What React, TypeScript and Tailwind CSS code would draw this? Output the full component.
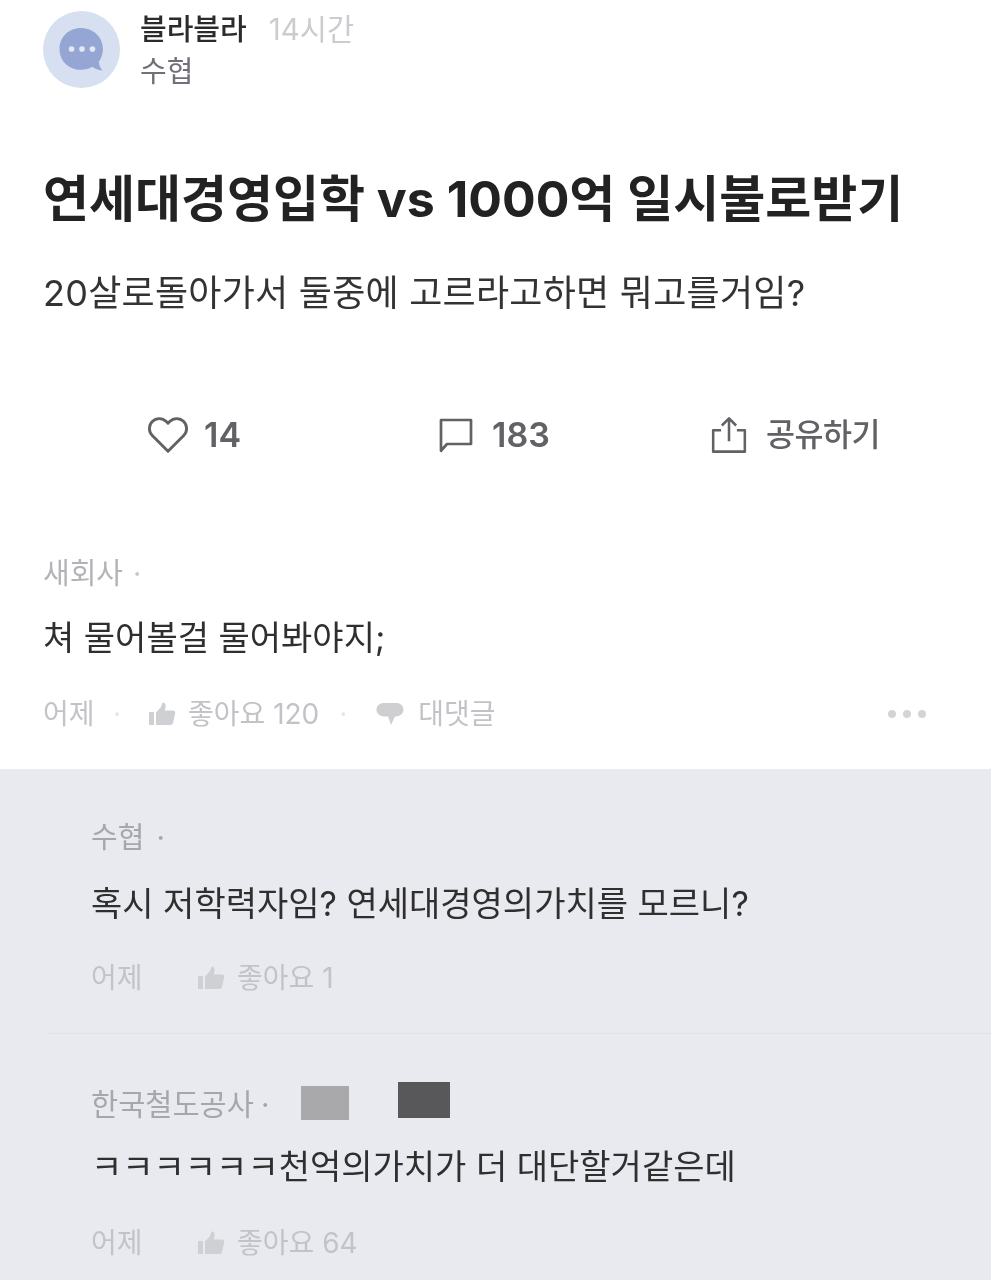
const font = { fontFamily: '"Inter", "Noto Sans CJK KR", sans-serif' };

function ThumbIcon({ className }: { className: string }) {
  return (
    <svg viewBox="0 0 28 24" className={className} fill="currentColor">
      <rect x="1" y="10" width="5" height="13" rx="0.5" />
      <path d="M8 10.500 13 5 14.500 0.500c2.500 0 3.600 1.800 3 4.500L16.800 8.500H25c1.600 0 2.600 1.400 2.200 2.800l-2.200 9.700c-.3 1.200-1.200 2-2.500 2H8z" />
    </svg>
  );
}

function ReplyIcon({ className }: { className: string }) {
  return (
    <svg viewBox="0 0 28 24" className={className} fill="currentColor">
      <path d="M8 1h12c4 0 7.500 2.500 7.500 6.500S24 14.500 20 14.500h-1L15 23l-3-8.500H8C4 14.500.5 11.500.5 7.500S4 1 8 1z" />
    </svg>
  );
}

function Meta({ likes, reply }: { likes: string; reply?: boolean }) {
  return (
    <div className="flex h-[36px] items-center text-[28px] leading-[36px] text-[#c2c3c7]">
      <span className="w-[50px] whitespace-nowrap">어제</span>
      {reply ? (
        <span className="ml-[16px] mr-[23px] w-[16px] text-center text-[#e6e6e8]">·</span>
      ) : (
        <span className="w-[56px]" />
      )}
      <ThumbIcon className="h-[24px] w-[28px] text-[#cfd0d4]" />
      <span className="ml-[12px] whitespace-nowrap">좋아요 {likes}</span>
      {reply && (
        <>
          <span className="ml-[16px] w-[16px] text-center text-[#e6e6e8]">·</span>
          <ReplyIcon className="ml-[25px] h-[24px] w-[28px] text-[#cfcfd2]" />
          <span className="ml-[14px] whitespace-nowrap">대댓글</span>
          <div className="ml-auto mr-[22px] flex gap-[7px]">
            <span className="size-[8px] rounded-full bg-[#d4d4d7]" />
            <span className="size-[8px] rounded-full bg-[#d4d4d7]" />
            <span className="size-[8px] rounded-full bg-[#d4d4d7]" />
          </div>
        </>
      )}
    </div>
  );
}

export default function App() {
  return (
    <div className="flex h-[1280px] w-[991px] flex-col overflow-hidden bg-white blur-[0.5px]" style={font}>
      <div className="pl-[43px] pr-[43px] pt-[11px]">
        {/* Post header */}
        <div className="flex items-start gap-[20px]">
          <div className="flex size-[77px] items-center justify-center rounded-full bg-[#d6e0f0]">
            <svg viewBox="0 0 44 44" className="mt-[1px] size-[46px]">
              <path d="M21 1c11.500 0 21 8.500 21 20 0 5-1.600 9-4 12.500.3 3 1.500 5.500 3.500 8-4-.3-7-1.300-9.500-3.500C29 39.500 25 41 21 41 9.500 41 .5 32.500.5 21S9.500 1 21 1z" fill="#95a5d4" />
              <circle cx="12" cy="21" r="2.700" fill="#e3e8f5" />
              <circle cx="22" cy="21" r="2.700" fill="#e3e8f5" />
              <circle cx="32" cy="21" r="2.700" fill="#e3e8f5" />
            </svg>
          </div>
          <div className="pt-[1px]">
            <div className="flex h-[36px] items-center whitespace-nowrap">
              <span className="text-[29px] font-medium leading-[36px] text-[#2b2b2b]">블라블라</span>
              <span className="-mt-[3px] ml-[22px] text-[29.500px] leading-[36px] text-[#ccccd0]">14시간</span>
            </div>
            <div className="mt-[6px] h-[36px] text-[29px] leading-[36px] text-[#70707a]">수협</div>
          </div>
        </div>

        {/* Post body */}
        <h1 className="mt-[79px] whitespace-nowrap text-[50px] font-bold leading-[60px] text-[#222222]">
          연세대경영입학 vs 1000억 일시불로받기
        </h1>
        <p className="mt-[42px] whitespace-nowrap text-[36px] leading-[44px] tracking-[0.25px] text-[#333333]">
          20살로돌아가서 둘중에 고르라고하면 뭐고를거임?
        </p>

        {/* Actions */}
        <div className="mt-[98px] flex h-[44px] items-center text-[#626266]">
          <div className="ml-[102px] flex w-[293px] items-center gap-[13px]">
            <svg viewBox="0 0 24 24" className="size-[46px]" fill="none" stroke="currentColor" strokeWidth="1.500">
              <path d="M12 20.500 3.800 12.300a5.200 5.200 0 0 1 0-7.300 5.100 5.100 0 0 1 7.300 0l.9.900.9-.9a5.100 5.100 0 0 1 7.300 0 5.200 5.200 0 0 1 0 7.300z" strokeLinejoin="round" />
            </svg>
            <span className="text-[34px] font-semibold leading-[44px]">14</span>
          </div>
          <div className="flex w-[272px] items-center gap-[18px]">
            <svg viewBox="0 0 24 24" className="size-[36px]" fill="none" stroke="currentColor" strokeWidth="1.800">
              <path d="M2 2h20v16H6l-4 4.500z" strokeLinejoin="round" />
            </svg>
            <span className="text-[34px] font-semibold leading-[44px]">183</span>
          </div>
          <div className="flex items-center gap-[18px]">
            <svg viewBox="0 0 24 24" className="size-[38px]" fill="none" stroke="currentColor" strokeWidth="1.600">
              <path d="M7 9H2v13.500h20V9h-5M12 16V1.500M7.500 6 12 1.500 16.500 6" strokeLinejoin="round" />
            </svg>
            <span className="whitespace-nowrap text-[31.500px] font-medium leading-[44px] tracking-[-0.5px]">공유하기</span>
          </div>
        </div>

        {/* First comment */}
        <div className="mt-[99px] flex h-[36px] text-[29px] leading-[36px] text-[#b4b4b8]">
          <span>새회사</span>
          <span className="ml-[10px] text-[#c8c8cc]">·</span>
        </div>
        <p className="mt-[24px] whitespace-nowrap text-[34px] leading-[44px] text-[#2f2f2f]">쳐 물어볼걸 물어봐야지;</p>
        <div className="mt-[36px]">
          <Meta likes="120" reply />
        </div>
      </div>

      {/* Replies */}
      <div className="mt-[37px] flex-1 bg-[#e9eaef] pl-[91px]">
        <div className="pt-[51px]">
          <div className="flex h-[36px] text-[29px] leading-[36px] text-[#a6a6ab]">
            <span>수협</span>
            <span className="ml-[12px]">·</span>
          </div>
          <p className="mt-[26px] whitespace-nowrap text-[34px] leading-[44px] text-[#2f2f2f]">
            혹시 저학력자임? 연세대경영의가치를 모르니?
          </p>
          <div className="mt-[34px]">
            <Meta likes="1" />
          </div>
        </div>
        <div className="-ml-[44px] mt-[37px] border-t border-[#e0e1e6]" />
        <div className="pt-[52px]">
          <div className="flex h-[36px] items-center whitespace-nowrap text-[29.500px] leading-[36px] text-[#a6a6ab]">
            <span className="w-[170px]">한국철도공사</span>
            <span className="w-[40px]">·</span>
            <span className="-mt-[2px] h-[34px] w-[48px] shrink-0 bg-[#a9a9ab]" />
            <span className="-mt-[8px] ml-[49px] h-[36px] w-[52px] shrink-0 bg-[#58585a]" />
          </div>
          <p className="mt-[23px] whitespace-nowrap text-[34px] leading-[44px] text-[#2f2f2f]">
            ㅋㅋㅋㅋㅋㅋ천억의가치가 더 대단할거같은데
          </p>
          <div className="mt-[36px]">
            <Meta likes="64" />
          </div>
        </div>
      </div>
    </div>
  );
}
